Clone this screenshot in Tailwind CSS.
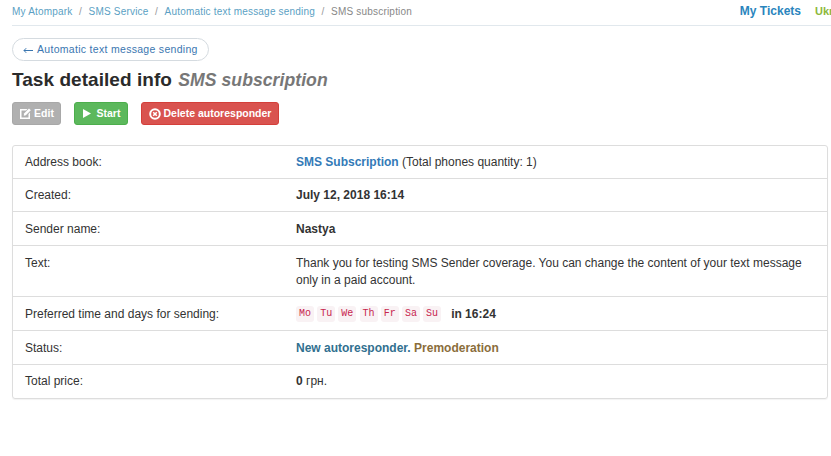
<!DOCTYPE html>
<html lang="en" class="bg-white">
  <head>
    <meta charset="UTF-8" />
    <title>SMS subscription</title>
    <script src="https://cdn.jsdelivr.net/npm/@tailwindcss/browser@4"></script>
  </head>
  <body class="w-[831px] h-[456px] overflow-hidden font-['Liberation_Sans',Arial,sans-serif] text-[12px] text-[#333]">

    <!-- Top bar -->
    <div class="ml-3 h-[26px] border-b border-[#e1e8ed] flex justify-between overflow-hidden">
      <div class="flex gap-[6.5px] pt-[6px] text-[10px] leading-[12px] text-[#999] tracking-[0.2px]">
        <a class="text-[#5b9fc4]">My Atompark</a><span>/</span>
        <a class="text-[#5b9fc4]">SMS Service</a><span>/</span>
        <a class="text-[#5b9fc4]">Automatic text message sending</a><span>/</span>
        <span class="text-[#888]">SMS subscription</span>
      </div>
      <div class="flex gap-[14px] pt-[3px] text-[12px] leading-[16px] font-bold whitespace-nowrap">
        <a class="text-[#2a85bd]">My Tickets</a>
        <span class="text-[11px] text-[#8db83c] w-[16px] overflow-hidden">Ukr</span>
      </div>
    </div>

    <div class="pl-3 pr-[3px]">
      <!-- Back link -->
      <a class="mt-3 inline-flex items-center gap-[4px] h-[23px] w-[197px] pl-[10px] rounded-full border border-[#d5dbe0] text-[10.500px] text-[#3a76b0] tracking-[0.3px]">
        <svg width="10" height="7" viewBox="0 0 10 7" class="mt-[2px]"><path d="M10 3.500H1M3.200 1.200L1 3.500l2.200 2.300" fill="none" stroke="#3a76b0"/></svg>
        <span>Automatic text message sending</span>
      </a>

      <h1 class="mt-[5px] h-[27px] text-[19px] leading-[27px] font-bold text-[#2b2b2b] tracking-[0.05px]">Task detailed info <em class="ml-[1px] text-[17.600px] text-[#777]">SMS subscription</em></h1>

      <!-- Actions -->
      <div class="mt-[9px] flex text-[10.500px] font-bold text-white">
        <button class="w-[49px] h-[23px] rounded-[3px] bg-[#b0b0b0] border border-[#a8a8a8] flex items-center justify-center gap-[2px]">
          <svg width="13" height="13" viewBox="0 0 13 13"><path d="M1 2h7.500L7 3.500H2.500v7h7V7L11 5.500V12H1z" fill="#fff"/><path d="M5 6.500L10 1.500l1.800 1.800L6.800 8.300 4.800 8.700z" fill="#fff"/></svg>
          Edit
        </button>
        <button class="ml-[13px] w-[54px] h-[23px] rounded-[3px] bg-[#5cb85c] border border-[#4cae4c] flex items-center justify-center gap-[6px] pl-[1px]">
          <svg width="8" height="9" viewBox="0 0 8 9"><path d="M0 0l8 4.500L0 9z" fill="#fff"/></svg>
          Start
        </button>
        <button class="ml-[13px] w-[138px] h-[23px] rounded-[3px] bg-[#d9534f] border border-[#d43f3a] flex items-center justify-center gap-[3px]">
          <svg width="12" height="12" viewBox="0 0 12 12"><circle cx="6" cy="6" r="4.800" fill="none" stroke="#fff" stroke-width="2"/><path d="M4.200 4.200l3.600 3.600M7.800 4.200L4.200 7.800" stroke="#fff" stroke-width="1.600"/></svg>
          Delete autoresponder
        </button>
      </div>

      <!-- Details -->
      <div class="mt-[20px] border border-[#ddd] rounded-[3px] shadow-[0_1px_1px_rgba(0,0,0,0.05)] divide-y divide-[#ddd]">
        <div class="flex h-[33px] items-center px-3">
          <div class="w-[271px]">Address book:</div>
          <div><a class="font-bold text-[#337ab7]">SMS Subscription</a> (Total phones quantity: 1)</div>
        </div>
        <div class="flex h-[33px] items-center px-3">
          <div class="w-[271px]">Created:</div>
          <div class="font-bold">July 12, 2018 16:14</div>
        </div>
        <div class="flex h-[34px] items-center px-3">
          <div class="w-[271px]">Sender name:</div>
          <div class="font-bold">Nastya</div>
        </div>
        <div class="flex h-[51px] pt-[9px] px-3 leading-[17px]">
          <div class="w-[271px] shrink-0">Text:</div>
          <div class="w-[520px]">Thank you for testing SMS Sender coverage. You can change the content of your text message only in a paid account.</div>
        </div>
        <div class="flex h-[34px] items-center px-3">
          <div class="w-[271px]">Preferred time and days for sending:</div>
          <div class="flex items-center font-bold">
            <div class="flex gap-[3.200px] font-['DejaVu_Sans_Mono',monospace] font-normal text-[10px] text-[#c7254e]">
              <code class="w-[18px] h-[16px] leading-[16px] text-center bg-[#f9f2f4] rounded-[3px]">Mo</code>
              <code class="w-[18px] h-[16px] leading-[16px] text-center bg-[#f9f2f4] rounded-[3px]">Tu</code>
              <code class="w-[18px] h-[16px] leading-[16px] text-center bg-[#f9f2f4] rounded-[3px]">We</code>
              <code class="w-[18px] h-[16px] leading-[16px] text-center bg-[#f9f2f4] rounded-[3px]">Th</code>
              <code class="w-[18px] h-[16px] leading-[16px] text-center bg-[#f9f2f4] rounded-[3px]">Fr</code>
              <code class="w-[18px] h-[16px] leading-[16px] text-center bg-[#f9f2f4] rounded-[3px]">Sa</code>
              <code class="w-[18px] h-[16px] leading-[16px] text-center bg-[#f9f2f4] rounded-[3px]">Su</code>
            </div>
            <span class="ml-[10px]">in 16:24</span>
          </div>
        </div>
        <div class="flex h-[34px] items-center px-3">
          <div class="w-[271px]">Status:</div>
          <div class="font-bold"><span class="text-[#31708f]">New autoresponder.</span> <span class="text-[#8a6d3b]">Premoderation</span></div>
        </div>
        <div class="flex h-[33px] items-center px-3 pb-[2px]">
          <div class="w-[271px]">Total price:</div>
          <div><b>0</b> грн.</div>
        </div>
      </div>
    </div>

  </body>
</html>
